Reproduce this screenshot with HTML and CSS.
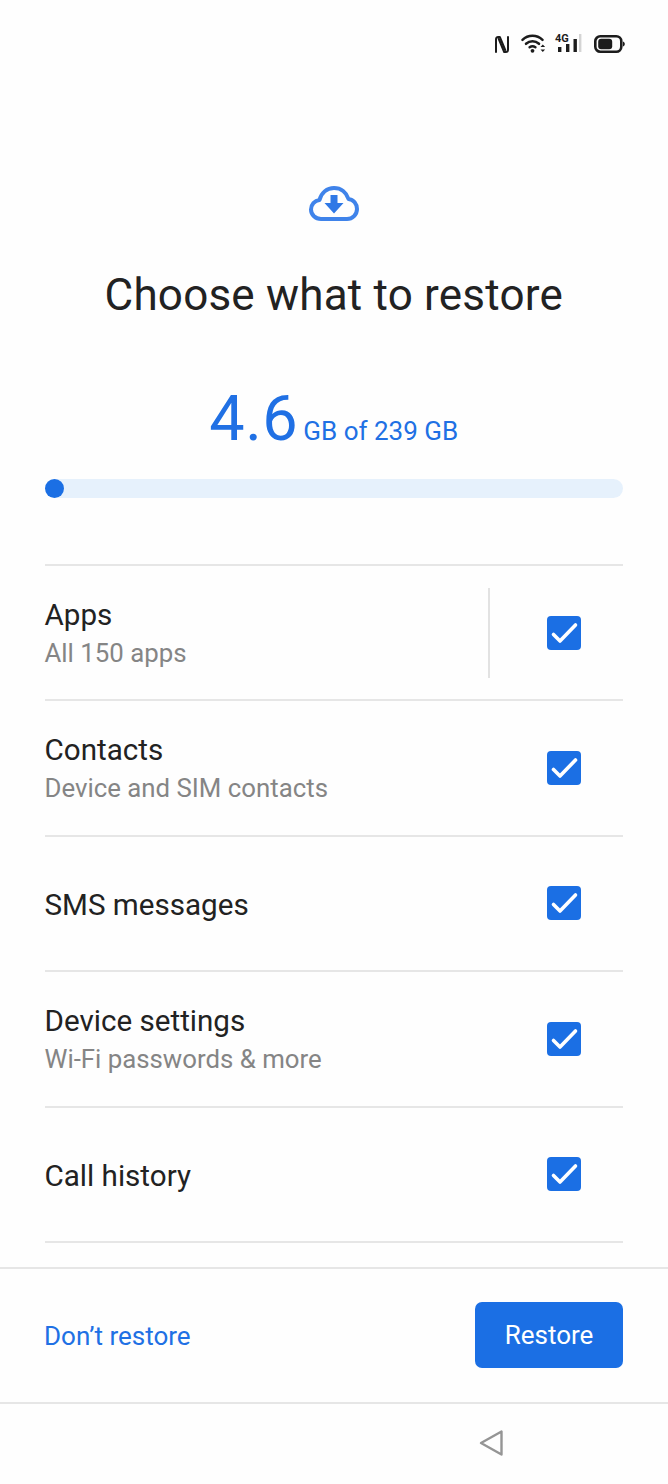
FILE: index.html
```html
<!DOCTYPE html>
<html lang="en">

<head>
    <meta charset="UTF-8">
    <meta name="viewport" content="width=device-width, initial-scale=1.0">
    <title>Choose what to restore</title>
    <link rel="stylesheet" href="styles.css">
</head>

<body>
    <div class="status-bar">
        <svg class="icon-nfc" width="16" height="19" viewBox="0 0 16 19" fill="none" stroke="#1c1c1c" stroke-width="2" stroke-linejoin="round" stroke-linecap="round">
            <path d="M2 17V4.5C2 2.8 3 2 4.2 2H5.8L11.2 15" />
            <path d="M14 2V14.5C14 16.2 13 17 11.8 17H10.2L4.8 4" />
        </svg>
        <svg class="icon-wifi" width="25" height="19" viewBox="0 0 25 19" fill="none" stroke="#1c1c1c" stroke-width="2.5" stroke-linecap="round">
            <path d="M1.5 5.8C7.2 0.4 15.8 0.4 21.5 5.8" />
            <path d="M5 9.8C8.8 6.4 14.2 6.4 18 9.8" />
            <path d="M8.6 13.2C10.4 11.9 12.6 11.9 14.4 13.2" />
            <circle cx="11.5" cy="16.8" r="1.9" fill="#1c1c1c" stroke="none" />
            <path d="M19.5 13L21.8 10.6L24.1 13H19.5ZM19.5 15.6L21.8 18L24.1 15.6H19.5Z" fill="#1c1c1c" stroke="none" />
        </svg>
        <div class="signal">
            <span class="signal-label">4G</span>
            <svg width="27" height="19" viewBox="0 0 27 19" fill="#1c1c1c">
                <rect x="3" y="13" width="3.4" height="5" />
                <rect x="11" y="10" width="3.4" height="8" />
                <rect x="18.5" y="5" width="3.4" height="13" />
                <rect x="24" y="0" width="2.4" height="18" fill="#d4d4d4" />
            </svg>
        </div>
        <svg class="icon-battery" width="31" height="18" viewBox="0 0 31 18" fill="none">
            <rect x="1.3" y="1.3" width="26" height="15.4" rx="5" stroke="#1c1c1c" stroke-width="2.6" />
            <rect x="4.2" y="3.8" width="14" height="10.4" rx="3" fill="#1c1c1c" />
            <path d="M29 6.5C30.2 7 30.8 8 30.8 9C30.8 10 30.2 11 29 11.5Z" fill="#1c1c1c" />
        </svg>
    </div>

    <div class="hero">
        <svg class="cloud" width="52" height="40" viewBox="0 0 52 40">
            <path d="M13 35C7.5 35 3 31 3 25.5C3 20.5 6.5 16.5 11.5 16C13.5 8.5 19 4 26 4C33 4 38.5 8.5 40.5 15C45.5 15.5 49 20 49 25C49 30.5 44.5 35 39 35Z" fill="none" stroke="#3f83ea" stroke-width="4" stroke-linejoin="round" />
            <path d="M22.5 11H29.5V19H35.5L26 29.5L16.5 19H22.5Z" fill="#2f78e6" />
        </svg>
        <h1 class="title">Choose what to restore</h1>
        <div class="usage">
            <span class="usage-value">4.6</span>
            <span class="usage-total">GB of 239 GB</span>
        </div>
        <div class="progress">
            <div class="progress-dot"></div>
        </div>
    </div>

    <ul class="restore-list">
        <li class="restore-row">
            <div class="row-text">
                <div class="row-title">Apps</div>
                <div class="row-sub">All 150 apps</div>
            </div>
            <div class="row-divider"></div>
            <div class="checkbox">
                <svg width="34" height="34" viewBox="0 0 34 34" fill="none" stroke="#fff" stroke-width="3.6" stroke-linecap="round" stroke-linejoin="round"><path d="M6.5 18.5L13 25L28.5 9" /></svg>
            </div>
        </li>
        <li class="restore-row">
            <div class="row-text">
                <div class="row-title">Contacts</div>
                <div class="row-sub">Device and SIM contacts</div>
            </div>
            <div class="checkbox">
                <svg width="34" height="34" viewBox="0 0 34 34" fill="none" stroke="#fff" stroke-width="3.6" stroke-linecap="round" stroke-linejoin="round"><path d="M6.5 18.5L13 25L28.5 9" /></svg>
            </div>
        </li>
        <li class="restore-row">
            <div class="row-text">
                <div class="row-title">SMS messages</div>
            </div>
            <div class="checkbox">
                <svg width="34" height="34" viewBox="0 0 34 34" fill="none" stroke="#fff" stroke-width="3.6" stroke-linecap="round" stroke-linejoin="round"><path d="M6.5 18.5L13 25L28.5 9" /></svg>
            </div>
        </li>
        <li class="restore-row">
            <div class="row-text">
                <div class="row-title">Device settings</div>
                <div class="row-sub">Wi-Fi passwords &amp; more</div>
            </div>
            <div class="checkbox">
                <svg width="34" height="34" viewBox="0 0 34 34" fill="none" stroke="#fff" stroke-width="3.6" stroke-linecap="round" stroke-linejoin="round"><path d="M6.5 18.5L13 25L28.5 9" /></svg>
            </div>
        </li>
        <li class="restore-row">
            <div class="row-text">
                <div class="row-title">Call history</div>
            </div>
            <div class="checkbox">
                <svg width="34" height="34" viewBox="0 0 34 34" fill="none" stroke="#fff" stroke-width="3.6" stroke-linecap="round" stroke-linejoin="round"><path d="M6.5 18.5L13 25L28.5 9" /></svg>
            </div>
        </li>
    </ul>

    <div class="footer">
        <a class="skip-link">Don’t restore</a>
        <button class="restore-btn">Restore</button>
    </div>

    <div class="nav-bar">
        <svg width="26" height="28" viewBox="0 0 26 28" fill="none" stroke="#959595" stroke-width="2.4" stroke-linejoin="round">
            <path d="M2 14L22.5 2.5V25.5Z" />
        </svg>
    </div>
</body>

</html>
```

FILE: styles.css
```css
* {
    box-sizing: border-box;
}

body {
    font-family: 'Roboto', 'Liberation Sans', sans-serif;
    margin: 0;
    padding: 0;
    width: 668px;
    height: 1484px;
    overflow: hidden;
    background-color: #fefefe;
    display: flex;
    flex-direction: column;
}

.status-bar {
    height: 62px;
    padding: 34px 43px 0 0;
    display: flex;
    justify-content: flex-end;
    align-items: flex-start;
}

.icon-nfc {
    margin-top: 1px;
}

.icon-wifi {
    margin-left: 11px;
}

.signal {
    position: relative;
    width: 27px;
    height: 19px;
    margin-left: 9px;
}

.signal svg {
    display: block;
}

.signal-label {
    position: absolute;
    left: 0;
    top: 0;
    font-size: 11px;
    line-height: 10px;
    font-weight: 700;
    color: #1c1c1c;
}

.icon-battery {
    margin-top: 1px;
    margin-left: 12px;
}

.hero {
    padding: 0 45px 0 44.5px;
    display: flex;
    flex-direction: column;
    align-items: center;
}

.cloud {
    margin-top: 122px;
    display: block;
}

.title {
    margin: 46px 0 0;
    font-size: 44px;
    line-height: 50px;
    font-weight: 400;
    letter-spacing: 0.2px;
    color: #222222;
}

.usage {
    margin-top: 60px;
    display: flex;
    align-items: baseline;
    gap: 5px;
    color: #2070e4;
    line-height: 78px;
}

.usage-value {
    font-size: 63px;
    letter-spacing: 0.5px;
}

.usage-total {
    font-size: 26px;
}

.progress {
    width: 100%;
    height: 19px;
    margin-top: 9px;
    background-color: #e6f1fc;
    border-radius: 10px;
}

.progress-dot {
    width: 19px;
    height: 19px;
    border-radius: 50%;
    background-color: #1b6fe4;
}

.restore-list {
    list-style-type: none;
    margin: 66px 45px 0;
    padding: 0;
    border-top: 2px solid #e6e6e6;
}

.restore-row {
    height: 135.4px;
    display: flex;
    align-items: center;
    border-bottom: 2px solid #e6e6e6;
    position: relative;
}

.row-text {
    flex: 1;
    margin: 3px 0 0 -0.5px;
}

.row-title {
    font-size: 29.6px;
    line-height: 38px;
    color: #222222;
}

.row-sub {
    font-size: 25.8px;
    line-height: 39px;
    color: #858585;
}

.row-divider {
    position: absolute;
    right: 133px;
    top: 22px;
    width: 2px;
    height: 90px;
    background-color: #e2e2e2;
}

.checkbox {
    width: 34px;
    height: 34px;
    margin-right: 42px;
    border-radius: 4px;
    background-color: #1b6fe4;
}

.checkbox svg {
    display: block;
}

.footer {
    margin-top: 24px;
    height: 137px;
    padding: 33px 45px 0 44px;
    border-top: 2px solid #e6e6e6;
    border-bottom: 2px solid #e6e6e6;
    display: flex;
    justify-content: space-between;
    align-items: flex-start;
}

.skip-link {
    font-size: 26px;
    line-height: 68px;
    color: #2070e4;
}

.restore-btn {
    width: 148px;
    height: 66px;
    border: none;
    border-radius: 7px;
    background-color: #1b6fe4;
    color: #ffffff;
    font-family: inherit;
    font-size: 26px;
    cursor: pointer;
}

.nav-bar {
    padding: 25px 0 0 479px;
}

.nav-bar svg {
    display: block;
}
```
